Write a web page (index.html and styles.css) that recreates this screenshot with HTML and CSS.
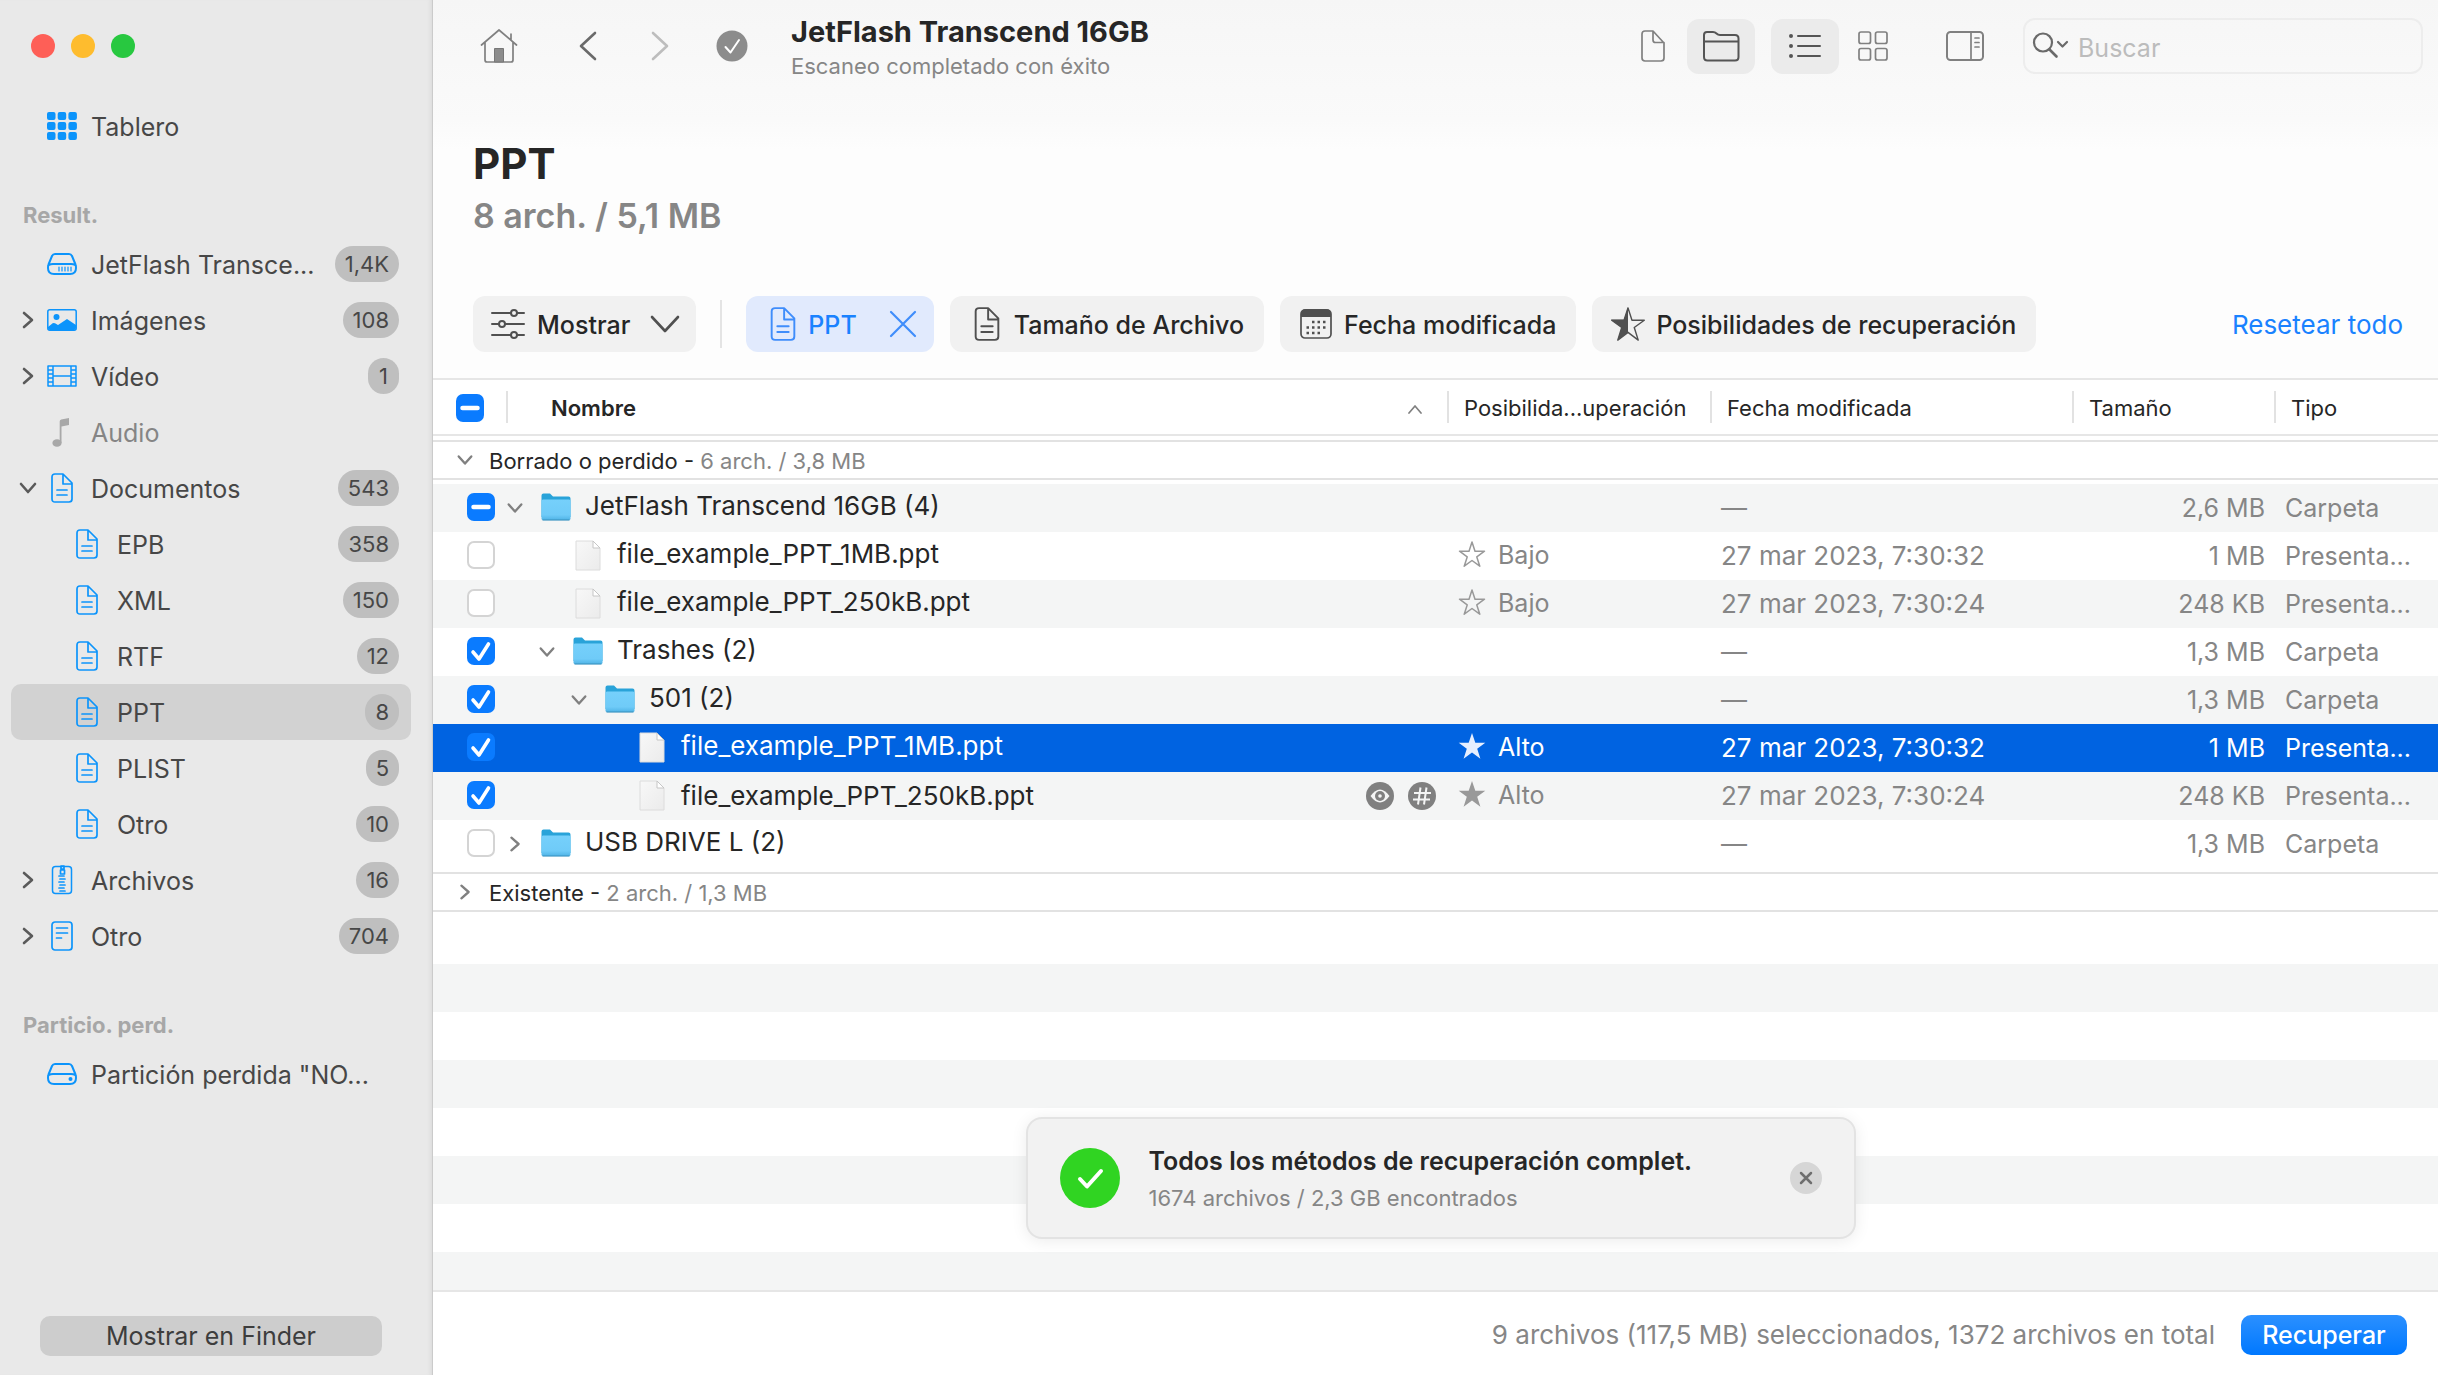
FILE: index.html
```html
<!DOCTYPE html>
<html lang="es">
<head>
<meta charset="utf-8">
<title>JetFlash Transcend 16GB</title>
<link rel="stylesheet" href="styles.css">
</head>
<body>
<svg class="sprite" aria-hidden="true">
  <defs>
    <linearGradient id="folder-front" x1="0" y1="0" x2="0" y2="1"><stop offset="0" stop-color="#76d0fb"/><stop offset=".75" stop-color="#6fcbf8"/><stop offset="1" stop-color="#4fb4e6"/></linearGradient>
    <linearGradient id="paper" x1="0" y1="0" x2="1" y2="1"><stop offset="0" stop-color="#f8f8f8"/><stop offset="1" stop-color="#ebebeb"/></linearGradient>
    <symbol id="chev-right" viewBox="0 0 20 20"><path d="M6 3l8 7-8 7" class="line w25"/></symbol>
    <symbol id="chev-down" viewBox="0 0 20 20"><path d="M3 6l7 8 7-8" class="line w25"/></symbol>
    <symbol id="i-grid9" viewBox="0 0 30 28"><g fill="currentColor"><rect x="0" y="0" width="8.500" height="8" rx="2"/><rect x="10.700" y="0" width="8.500" height="8" rx="2"/><rect x="21.400" y="0" width="8.500" height="8" rx="2"/><rect x="0" y="10" width="8.500" height="8" rx="2"/><rect x="10.700" y="10" width="8.500" height="8" rx="2"/><rect x="21.400" y="10" width="8.500" height="8" rx="2"/><rect x="0" y="20" width="8.500" height="8" rx="2"/><rect x="10.700" y="20" width="8.500" height="8" rx="2"/><rect x="21.400" y="20" width="8.500" height="8" rx="2"/></g></symbol>
    <symbol id="i-drive" viewBox="0 0 30 22"><path d="M8 1h14q2 0 3 2l3.500 8.500q.5 1 .5 3.500 0 6-6 6H7q-6 0-6-6 0-2.500.5-3.500L5 3q1-2 3-2zM2 12q1.500-1 4-1h18q2.500 0 4 1" class="line w18"/><path d="M12 14v4M15 14v4M18 14v4M21 14v4M24 14v4" class="line w12"/></symbol>
    <symbol id="i-disk" viewBox="0 0 30 22"><path d="M8 1h14q2 0 3 2l3.500 8.500q.5 1 .5 3.500 0 6-6 6H7q-6 0-6-6 0-2.500.5-3.500L5 3q1-2 3-2zM2 12q1.500-1 4-1h18q2.500 0 4 1" class="line w18"/><circle cx="23.500" cy="16" r="2" fill="currentColor"/></symbol>
    <symbol id="i-image" viewBox="0 0 30 22"><rect x=".8" y=".8" width="28.400" height="20.400" rx="2" class="line w15"/><circle cx="9.500" cy="8" r="3" fill="currentColor"/><path d="M1 18l5-4 2 .3 3 1.700 9-6 9 6v3q0 2-2 2H3q-2 0-2-2z" fill="currentColor"/></symbol>
    <symbol id="i-film" viewBox="0 0 30 22"><path d="M1 1h28v20H1zM6 1v20M24 1v20M6 11h18M1 5h5M1 9h5M1 13h5M1 17h5M24 5h5M24 9h5M24 13h5M24 17h5" class="line w15"/></symbol>
    <symbol id="i-note" viewBox="0 0 30 30"><ellipse cx="10" cy="26" rx="4.600" ry="3.800" fill="currentColor"/><path d="M12.700 26V4.500q0-1.500 1.500-2L22 1v7l-7.500 1.500V26z" fill="currentColor"/></symbol>
    <symbol id="i-doc" viewBox="0 0 22 30"><path d="M4 1h8l9 9v16q0 3-3 3H4q-3 0-3-3V4q0-3 3-3zM12 1v10h9M6 17h10M6 22h10" class="line w16"/></symbol>
    <symbol id="i-file" viewBox="0 0 26 34"><path d="M5 2h8l11 12v15q0 3-3 3H5q-3 0-3-3V5q0-3 3-3zM13 2v9q0 2.500 2.500 2.500H24" class="line w16"/></symbol>
    <symbol id="i-zip" viewBox="0 0 22 30"><rect x="1.500" y="1.500" width="19" height="27" rx="3" class="line w15"/><path d="M10 1h3v3h-3zM9.500 5h4v4h-4zM8 11h5M9 14h5M8 17h5M9 20h5M8 23h5M9 26h5" class="line w16"/></symbol>
    <symbol id="i-other" viewBox="0 0 22 30"><rect x="1" y="1" width="20" height="28" rx="3" class="line w16"/><path d="M5.500 7h11M5.500 12h11M5.500 17h5" class="line w16"/></symbol>
    <symbol id="i-folder" viewBox="0 0 32 32"><path d="M1.500 4.500q0-2 2-2h6.500l3 3h15.500q2 0 2 2V26h-29z" fill="#29a3d9"/><rect x="1.500" y="8.500" width="29" height="20.500" rx="1.500" fill="url(#folder-front)"/><path d="M2.500 29h27" stroke="#3e97c4" stroke-width="1.200"/></symbol>
    <symbol id="i-paper" viewBox="0 0 32 32"><path d="M4 2h17l7 7v22H4z" fill="url(#paper)" stroke="#dcdcdc"/><path d="M21 2v7h7z" fill="#fff" stroke="#c6c6c6"/></symbol>
    <symbol id="i-star" viewBox="0 0 28 28"><path d="M14 2l3 9.200h9.500l-7.700 5.700 3 9.300-7.800-5.700-7.800 5.700 3-9.300L1.500 11.200H11z" fill="none" stroke="currentColor" stroke-width="1.500" stroke-linejoin="round"/></symbol>
    <symbol id="i-starfull" viewBox="0 0 28 28"><path d="M14 1l3.300 9.800h10l-8.100 6 3.200 10-8.400-6.200-8.400 6.200 3.200-10L.7 10.800h10z" fill="currentColor"/></symbol>
    <symbol id="i-starhalf" viewBox="0 0 38 38"><path d="M19 2l4.200 13h13l-10.600 7.700 4.200 13.300L19 27.800 8.200 36l4.200-13.300L1.800 15h13z" class="line w15"/><path d="M19 1v27L8 36.500l4.300-13.700L1 14.500h13.800z" fill="currentColor"/></symbol>
    <symbol id="i-eye" viewBox="0 0 28 28"><circle cx="14" cy="14" r="14" fill="#808080"/><path d="M4.500 14Q14 1 23.500 14 14 27 4.500 14z" fill="#f4f5f5"/><circle cx="14" cy="14" r="5" fill="#808080"/><circle cx="14" cy="14" r="1.800" fill="#f4f5f5"/></symbol>
    <symbol id="i-hash" viewBox="0 0 28 28"><circle cx="14" cy="14" r="14" fill="#808080"/><path d="M12.500 5.500l-2.500 17M18.500 5.500l-2.500 17M6 11h17M5 17.500h17" stroke="#f4f5f5" stroke-width="2" fill="none"/></symbol>
  </defs>
</svg>

<div class="app">
  <aside class="sidebar">
    <div class="lights"><button class="light red" aria-label="Cerrar"></button><button class="light amber" aria-label="Minimizar"></button><button class="light green" aria-label="Ampliar"></button></div>
    <nav class="nav">
      <ul class="list first">
        <li><a class="item" href="#"><span class="disc"></span><span class="ico"><svg width="30" height="28"><use href="#i-grid9"/></svg></span><span class="label">Tablero</span></a></li>
      </ul>
      <h2 class="section">Result.</h2>
      <ul class="list">
        <li><a class="item" href="#"><span class="disc"></span><span class="ico"><svg width="30" height="22"><use href="#i-drive"/></svg></span><span class="label">JetFlash Transce...</span><span class="badge">1,4K</span></a></li>
        <li><a class="item" href="#"><svg class="disc"><use href="#chev-right"/></svg><span class="ico"><svg width="30" height="22"><use href="#i-image"/></svg></span><span class="label">Imágenes</span><span class="badge">108</span></a></li>
        <li><a class="item" href="#"><svg class="disc"><use href="#chev-right"/></svg><span class="ico"><svg width="30" height="22"><use href="#i-film"/></svg></span><span class="label">Vídeo</span><span class="badge">1</span></a></li>
        <li><a class="item off" href="#"><span class="disc"></span><span class="ico"><svg width="30" height="30"><use href="#i-note"/></svg></span><span class="label">Audio</span></a></li>
        <li><a class="item" href="#"><svg class="disc"><use href="#chev-down"/></svg><span class="ico"><svg width="22" height="30"><use href="#i-doc"/></svg></span><span class="label">Documentos</span><span class="badge">543</span></a>
          <ul class="list sub">
            <li><a class="item" href="#"><span class="disc"></span><span class="ico"><svg width="22" height="30"><use href="#i-doc"/></svg></span><span class="label">EPB</span><span class="badge">358</span></a></li>
            <li><a class="item" href="#"><span class="disc"></span><span class="ico"><svg width="22" height="30"><use href="#i-doc"/></svg></span><span class="label">XML</span><span class="badge">150</span></a></li>
            <li><a class="item" href="#"><span class="disc"></span><span class="ico"><svg width="22" height="30"><use href="#i-doc"/></svg></span><span class="label">RTF</span><span class="badge">12</span></a></li>
            <li><a class="item current" href="#" aria-current="page"><span class="disc"></span><span class="ico"><svg width="22" height="30"><use href="#i-doc"/></svg></span><span class="label">PPT</span><span class="badge">8</span></a></li>
            <li><a class="item" href="#"><span class="disc"></span><span class="ico"><svg width="22" height="30"><use href="#i-doc"/></svg></span><span class="label">PLIST</span><span class="badge">5</span></a></li>
            <li><a class="item" href="#"><span class="disc"></span><span class="ico"><svg width="22" height="30"><use href="#i-doc"/></svg></span><span class="label">Otro</span><span class="badge">10</span></a></li>
          </ul>
        </li>
        <li><a class="item" href="#"><svg class="disc"><use href="#chev-right"/></svg><span class="ico"><svg width="22" height="30"><use href="#i-zip"/></svg></span><span class="label">Archivos</span><span class="badge">16</span></a></li>
        <li><a class="item" href="#"><svg class="disc"><use href="#chev-right"/></svg><span class="ico"><svg width="22" height="30"><use href="#i-other"/></svg></span><span class="label">Otro</span><span class="badge">704</span></a></li>
      </ul>
      <h2 class="section">Particio. perd.</h2>
      <ul class="list">
        <li><a class="item" href="#"><span class="disc"></span><span class="ico"><svg width="30" height="22"><use href="#i-disk"/></svg></span><span class="label">Partición perdida "NO...</span></a></li>
      </ul>
    </nav>
    <button class="finder">Mostrar en Finder</button>
  </aside>

  <main class="main">
    <header class="head">
      <div class="toolbar">
        <button class="tool home" aria-label="Inicio"><svg width="38" height="36" viewBox="0 0 38 36"><path d="M1.500 17L19 2l17.500 15M5 14.500V32q0 2 2 2h24q2 0 2-2V14.500M31 12V6" class="line w16"/><path d="M14.500 20.500h9V34h-9z" fill="#8c8c8c" stroke="#777"/></svg></button>
        <button class="tool back" aria-label="Atrás"><svg width="20" height="32" viewBox="0 0 20 32"><path d="M17 3L3 16l14 13" class="line w25"/></svg></button>
        <button class="tool fwd" aria-label="Adelante"><svg width="20" height="32" viewBox="0 0 20 32"><path d="M3 3l14 13L3 29" class="line w25"/></svg></button>
        <svg class="done" width="32" height="32" viewBox="0 0 32 32"><circle cx="16" cy="16" r="15.500" fill="#8c8c8c"/><path d="M9.500 17l5 5.500L23 10" fill="none" stroke="#fff" stroke-width="2" stroke-linecap="round" stroke-linejoin="round"/></svg>
        <div class="titles"><div class="title">JetFlash Transcend 16GB</div><div class="status">Escaneo completado con éxito</div></div>
        <div class="views">
          <button class="view" aria-label="Archivos"><svg width="26" height="34"><use href="#i-file"/></svg></button>
          <button class="view on" aria-label="Carpetas"><svg width="38" height="32" viewBox="0 0 38 32"><path d="M2 11.500V5q0-3 3-3h6q2 0 3.500 1.500T18 5h15q3.500 0 3.500 3.500v3M2 11.500h34.500V27q0 3.500-3.500 3.500H5.500Q2 30.500 2 27z" class="line w18"/></svg></button>
        </div>
        <div class="views layout">
          <button class="view on" aria-label="Lista"><svg width="34" height="26" viewBox="0 0 34 26"><path d="M10 3h22M10 13h22M10 23h22" class="line w18"/><circle cx="3" cy="3" r="2" fill="currentColor"/><circle cx="3" cy="13" r="2" fill="currentColor"/><circle cx="3" cy="23" r="2" fill="currentColor"/></svg></button>
          <button class="view" aria-label="Cuadrícula"><svg width="32" height="32" viewBox="0 0 32 32"><g class="line w16"><rect x="2" y="2" width="11.500" height="11.500" rx="2"/><rect x="18.500" y="2" width="11.500" height="11.500" rx="2"/><rect x="2" y="18.500" width="11.500" height="11.500" rx="2"/><rect x="18.500" y="18.500" width="11.500" height="11.500" rx="2"/></g></svg></button>
        </div>
        <button class="view panel" aria-label="Panel lateral"><svg width="40" height="32" viewBox="0 0 40 32"><rect x="2" y="2" width="36" height="28" rx="3.500" class="line w18"/><path d="M26 2v28M30 8h4M30 12.500h4M30 17h4" class="line w16"/></svg></button>
        <label class="search"><svg width="38" height="30" viewBox="0 0 38 30"><circle cx="11" cy="11.500" r="9" class="line w20"/><path d="M17.500 18.500l7 7" class="line w25"/><path d="M26 11l4.500 4.500L35 11" class="line w20"/></svg><input type="search" placeholder="Buscar" aria-label="Buscar"></label>
      </div>

      <h1 class="heading">PPT</h1>
      <p class="summary">8 arch. / 5,1 MB</p>

      <div class="filters">
        <button class="chip show"><svg width="34" height="30" viewBox="0 0 34 30"><path d="M1 4h19M26 4h7M1 15h7M14 15h19M1 26h19M26 26h7" class="line w18"/><g class="line w18"><circle cx="23" cy="4" r="3"/><circle cx="11" cy="15" r="3"/><circle cx="23" cy="26" r="3"/></g></svg><span>Mostrar</span><svg class="caret" width="30" height="20" viewBox="0 0 30 20"><path d="M2 3l13 14L28 3" class="line w25"/></svg></button>
        <span class="rule"></span>
        <button class="chip active"><svg width="26" height="34"><use href="#i-doc"/></svg><span>PPT</span><svg class="x" width="28" height="28" viewBox="0 0 28 28"><path d="M2 2l24 24M26 2L2 26" class="line w20"/></svg></button>
        <button class="chip size"><svg width="26" height="34"><use href="#i-doc"/></svg><span>Tamaño de Archivo</span></button>
        <button class="chip date"><svg width="32" height="32" viewBox="0 0 32 32"><rect x="1" y="2" width="30" height="28" rx="4" class="line w16"/><path d="M1 9V6q0-5 5-5h20q5 0 5 5v3z" fill="currentColor"/><path d="M12 14h15M6.500 19.500h20M6.500 25h15" stroke="currentColor" stroke-width="2.500" stroke-dasharray="2.500 3" fill="none"/></svg><span>Fecha modificada</span></button>
        <button class="chip chance"><svg width="36" height="36"><use href="#i-starhalf"/></svg><span>Posibilidades de recuperación</span></button>
        <a class="reset" href="#">Resetear todo</a>
      </div>
    </header>

    <div class="content">
      <table class="files">
        <colgroup><col class="c-check"><col class="c-name"><col class="c-chance"><col class="c-date"><col class="c-size"><col class="c-type"></colgroup>
        <thead>
          <tr>
            <th class="pick"><input type="checkbox" class="box mixed" aria-label="Seleccionar todo"></th>
            <th class="name-h"><span>Nombre</span><svg width="16" height="10" viewBox="0 0 16 10"><path d="M2 9l6-7 6 7" class="line w16"/></svg></th>
            <th>Posibilida...uperación</th><th>Fecha modificada</th><th>Tamaño</th><th>Tipo</th>
          </tr>
        </thead>
        <tbody class="group open">
          <tr><th colspan="6" scope="rowgroup"><svg class="tw"><use href="#chev-down"/></svg>Borrado o perdido - <span class="muted">6 arch. / 3,8 MB</span></th></tr>
        </tbody>
        <tbody class="rows">
          <tr><td class="pick"><input type="checkbox" class="box mixed" aria-label="JetFlash Transcend 16GB"></td><td class="name l1"><svg class="tw"><use href="#chev-down"/></svg><svg class="fi"><use href="#i-folder"/></svg>JetFlash Transcend 16GB (4)</td><td></td><td class="when">—</td><td class="num">2,6 MB</td><td>Carpeta</td></tr>
          <tr><td class="pick"><input type="checkbox" class="box" aria-label="file_example_PPT_1MB.ppt"></td><td class="name l2"><span class="tw"></span><svg class="fi"><use href="#i-paper"/></svg>file_example_PPT_1MB.ppt</td><td><svg class="st"><use href="#i-star"/></svg>Bajo</td><td class="when">27 mar 2023, 7:30:32</td><td class="num">1 MB</td><td>Presenta...</td></tr>
          <tr><td class="pick"><input type="checkbox" class="box" aria-label="file_example_PPT_250kB.ppt"></td><td class="name l2"><span class="tw"></span><svg class="fi"><use href="#i-paper"/></svg>file_example_PPT_250kB.ppt</td><td><svg class="st"><use href="#i-star"/></svg>Bajo</td><td class="when">27 mar 2023, 7:30:24</td><td class="num">248 KB</td><td>Presenta...</td></tr>
          <tr><td class="pick"><input type="checkbox" class="box" checked aria-label="Trashes"></td><td class="name l2"><svg class="tw"><use href="#chev-down"/></svg><svg class="fi"><use href="#i-folder"/></svg>Trashes (2)</td><td></td><td class="when">—</td><td class="num">1,3 MB</td><td>Carpeta</td></tr>
          <tr><td class="pick"><input type="checkbox" class="box" checked aria-label="501"></td><td class="name l3"><svg class="tw"><use href="#chev-down"/></svg><svg class="fi"><use href="#i-folder"/></svg>501 (2)</td><td></td><td class="when">—</td><td class="num">1,3 MB</td><td>Carpeta</td></tr>
          <tr class="selected"><td class="pick"><input type="checkbox" class="box" checked aria-label="file_example_PPT_1MB.ppt en 501"></td><td class="name l4"><span class="tw"></span><svg class="fi"><use href="#i-paper"/></svg>file_example_PPT_1MB.ppt</td><td><svg class="st"><use href="#i-starfull"/></svg>Alto</td><td class="when">27 mar 2023, 7:30:32</td><td class="num">1 MB</td><td>Presenta...</td></tr>
          <tr><td class="pick"><input type="checkbox" class="box" checked aria-label="file_example_PPT_250kB.ppt en 501"></td><td class="name l4"><div class="line-up"><span class="tw"></span><svg class="fi"><use href="#i-paper"/></svg>file_example_PPT_250kB.ppt<button class="act" aria-label="Vista previa"><svg width="28" height="28"><use href="#i-eye"/></svg></button><button class="act" aria-label="Hexadecimal"><svg width="28" height="28"><use href="#i-hash"/></svg></button></div></td><td><svg class="st"><use href="#i-starfull"/></svg>Alto</td><td class="when">27 mar 2023, 7:30:24</td><td class="num">248 KB</td><td>Presenta...</td></tr>
          <tr><td class="pick"><input type="checkbox" class="box" aria-label="USB DRIVE L"></td><td class="name l1"><svg class="tw"><use href="#chev-right"/></svg><svg class="fi"><use href="#i-folder"/></svg>USB DRIVE L (2)</td><td></td><td class="when">—</td><td class="num">1,3 MB</td><td>Carpeta</td></tr>
        </tbody>
        <tbody class="group">
          <tr><th colspan="6" scope="rowgroup"><svg class="tw"><use href="#chev-right"/></svg>Existente - <span class="muted">2 arch. / 1,3 MB</span></th></tr>
        </tbody>
      </table>
      <div class="empty"></div>
      <div class="toast-layer">
        <div class="toast" role="status">
          <svg width="60" height="60" viewBox="0 0 60 60"><circle cx="30" cy="30" r="30" fill="#30d422"/><path d="M20 31l7 7.500L41 23" fill="none" stroke="#fff" stroke-width="4" stroke-linecap="round" stroke-linejoin="round"/></svg>
          <div class="toast-text"><div class="toast-title">Todos los métodos de recuperación complet.</div><div class="toast-sub">1674 archivos / 2,3 GB encontrados</div></div>
          <button class="close" aria-label="Cerrar aviso"><svg width="32" height="32" viewBox="0 0 32 32"><circle cx="16" cy="16" r="16" fill="#d6d6d6"/><path d="M11 11l10 10M21 11L11 21" stroke="#6f6f6f" stroke-width="2.500" stroke-linecap="round"/></svg></button>
        </div>
      </div>
    </div>

    <footer class="foot"><span>9 archivos (117,5 MB) seleccionados, 1372 archivos en total</span><button class="recover">Recuperar</button></footer>
  </main>
</div>
</body>
</html>
```
FILE: styles.css
```css
* { box-sizing: border-box; }
body { margin: 0; font-family: Inter, "Liberation Sans", sans-serif; font-size: 25px; line-height: 32px; color: #262626; background: #fff; }
button { margin: 0; padding: 0; border: 0; background: none; font: inherit; color: inherit; }
a { color: inherit; text-decoration: none; }
ul { list-style: none; margin: 0; padding: 0; }
h1, h2, p { margin: 0; }
svg { display: block; flex: none; }
.sprite { position: absolute; width: 0; height: 0; }
.line { fill: none; stroke: currentColor; stroke-linecap: round; stroke-linejoin: round; }
.w12 { stroke-width: 1.2; } .w15 { stroke-width: 1.5; } .w16 { stroke-width: 1.7; } .w18 { stroke-width: 2; } .w20 { stroke-width: 2.2; } .w25 { stroke-width: 2.6; }

.app { display: flex; min-height: 100vh; }

/* Sidebar */
.sidebar { flex: none; width: 433px; display: flex; flex-direction: column; padding-top: 34px; background: #e9e9e9; border-right: 1px solid #cbcbcb; box-shadow: inset -4px 0 4px -3px #d8d8d8; color: #474747; }
.lights { display: flex; gap: 16px; padding-left: 31px; margin-bottom: 40px; }
.light { width: 24px; height: 24px; border-radius: 50%; }
.red { background: #fe5f57; } .amber { background: #febc2e; } .green { background: #28c840; }
.nav { flex: 1; }
.item { display: flex; align-items: center; height: 56px; margin: 0 21px 0 11px; padding: 0 12px 0 7px; border-radius: 10px; }
.sub .item { padding-left: 33px; }
.current { background: #d2d2d2; }
.disc { flex: none; width: 20px; height: 20px; color: #5a5a5a; }
.ico { flex: none; display: flex; justify-content: center; width: 30px; margin: 0 14px 0 9px; color: #0c94fb; }
.sub .ico { margin-left: 8px; margin-right: 15px; }
.label { flex: 1; padding-top: 2px; white-space: nowrap; }
.off { color: #858585; } .off .ico { color: #a8a8a8; }
.badge { min-width: 31px; height: 36px; padding: 0 10px; border-radius: 18px; background: #bfbfbf; font-size: 22px; line-height: 36px; text-align: center; }
.section { margin-top: 38px; padding: 2px 0 0 23px; font-size: 22px; line-height: 42px; font-weight: 700; color: #a7a7a7; }
.finder { width: 342px; height: 40px; margin: 0 0 19px 40px; border-radius: 10px; background: #cdcdcd; color: #3d3d3d; }

/* Header */
.main { flex: 1; min-width: 0; display: flex; flex-direction: column; }
.head { padding: 0 35px 26px 40px; background: linear-gradient(#f6f6f6, #fafafa 120px, #fdfdfd 150px); border-bottom: 2px solid #e6e6e6; }
.toolbar { display: flex; align-items: center; height: 92px; margin-right: -20px; color: #808080; }
.home { margin-left: 7px; }
.back { margin-left: 60px; color: #6a6a6a; }
.fwd { margin-left: 52px; color: #bdbdbd; }
.done { margin-left: 46px; }
.titles { flex: 1; margin-left: 43px; padding-top: 4px; white-space: nowrap; }
.title { font-size: 29px; line-height: 36px; font-weight: 700; color: #262626; }
.status { font-size: 22px; line-height: 32px; color: #868686; }
.views { display: flex; }
.view { display: flex; align-items: center; justify-content: center; width: 68px; height: 55px; border-radius: 12px; }
.on { background: #ebebeb; color: #555; }
.layout { margin-left: 16px; }
.panel { margin: 0 24px; }
.search { display: flex; align-items: center; width: 400px; height: 56px; padding-left: 7px; border: 2px solid #ededed; border-radius: 12px; color: #6a6a6a; }
.search input { flex: 1; min-width: 0; margin-left: 8px; padding: 4px 0 0; border: 0; outline: 0; background: none; font: inherit; color: #262626; }
.search input::placeholder { color: #bcbcbc; opacity: 1; }
.heading { margin-top: 44px; font-size: 42px; line-height: 56px; font-weight: 700; }
.summary { font-size: 34px; line-height: 48px; font-weight: 600; color: #868686; }
.filters { display: flex; align-items: center; gap: 16px; margin-top: 56px; white-space: nowrap; }
.chip { display: flex; align-items: center; gap: 12px; height: 56px; padding: 0 20px; border-radius: 12px; background: #f1f1f1; font-weight: 500; }
.chip span { padding-top: 2px; }
.chip svg { color: #505050; }
.show { padding: 0 16px 0 18px; }
.show .caret { margin-left: 8px; }
.rule { width: 2px; height: 48px; margin: 0 8px; background: #e4e4e4; }
.active { background: #e1eafd; color: #1a82ff; padding: 0 17px 0 24px; }
.active svg { color: #3f8dfb; }
.active .x { margin-left: 20px; }
.size { gap: 14px; padding-left: 24px; }
.chance { gap: 10px; padding-left: 18px; }
.reset { margin-left: auto; padding-top: 2px; font-size: 26px; color: #1a82ff; }

/* Table */
.content { position: relative; flex: 1; display: flex; flex-direction: column; }
.files { width: 100%; table-layout: fixed; border-collapse: separate; border-spacing: 0; white-space: nowrap; }
.c-check { width: 73px; } .c-chance { width: 263px; } .c-date { width: 362px; } .c-size { width: 202px; } .c-type { width: 164px; }
.files th, .files td { padding: 0 0 0 11px; text-align: left; vertical-align: middle; }
.files thead th { height: 56px; padding: 2px 0 0 17px; border-bottom: 2px solid #e6e6e6; font-size: 22px; font-weight: 400; background: linear-gradient(#e2e2e2, #e2e2e2) 0 center / 2px 32px no-repeat; }
.files thead .pick { padding-left: 23px; background: none; }
.files thead .name-h { padding: 2px 24px 0 45px; font-weight: 600; }
.name-h span { display: inline-block; }
.name-h svg { float: right; margin-top: 12px; color: #808080; }
.group th { height: 40px; padding: 2px 0 0 22px; border: solid #e2e2e2; border-width: 2px 0; font-size: 22px; line-height: 30px; font-weight: 400; }
.files .group th { padding: 2px 0 0 23px; }
.group .tw { display: inline-block; margin-right: 15px; vertical-align: 0; }
.open::before, .open::after, .rows::after { content: ""; display: table-row; height: 4px; }
.muted { color: #868686; }
.rows td { height: 48px; color: #868686; }
.rows tr:nth-child(odd) { background: #f4f5f5; }
.files td.pick { padding: 0 0 2px 34px; }
.files td.name { padding-left: 0; font-size: 26px; color: #262626; }
.files td.when { font-size: 26px; }
.files td.num { padding-right: 9px; text-align: right; }
.name > *, .line-up > .tw, .line-up > .fi, .st { display: inline-block; }
.tw { width: 18px; height: 18px; color: #808080; vertical-align: middle; }
.fi { width: 32px; height: 32px; margin: 0 13px 3px 16px; vertical-align: middle; }
.st { width: 28px; height: 28px; margin: 0 12px 5px 0; color: #999; vertical-align: middle; }
.files td.l2 { padding-left: 32px; } .files td.l3 { padding-left: 64px; } .files td.l4 { padding-left: 96px; }
.line-up { display: flex; align-items: center; padding-right: 11px; }
.act { margin-left: 14px; }
.act:first-of-type { margin-left: auto; }
.rows tr.selected { background: #0063e1; }
.files .selected td { color: #fff; }
.selected .st { color: #e6efff; }
.box { appearance: none; display: block; width: 28px; height: 28px; margin: 0; border: 2px solid #d4d4d4; border-radius: 7px; background: #fff center / 28px 28px no-repeat; }
.box:checked, .box.mixed { border: 0; background-color: #0a7bff; }
.box:checked { background-image: url("data:image/svg+xml,%3Csvg xmlns='http://www.w3.org/2000/svg' viewBox='0 0 28 28'%3E%3Cpath d='M6 15l6 7L21.500 7' fill='none' stroke='white' stroke-width='3.600' stroke-linecap='round' stroke-linejoin='round'/%3E%3C/svg%3E"); }
.box.mixed { background-image: url("data:image/svg+xml,%3Csvg xmlns='http://www.w3.org/2000/svg' viewBox='0 0 28 28'%3E%3Cpath d='M6.500 14h15' fill='none' stroke='white' stroke-width='4.500' stroke-linecap='round'/%3E%3C/svg%3E"); }
.empty { flex: 1; margin-top: 4px; background: repeating-linear-gradient(#fff 0 48px, #f4f5f5 48px 96px); }

/* Notice */
.toast-layer { position: absolute; left: 10px; right: 0; bottom: 51px; display: flex; justify-content: center; }
.toast { display: flex; align-items: center; width: 830px; height: 122px; padding: 0 32px; border: 2px solid #e3e3e3; border-radius: 16px; background: #f2f2f2; box-shadow: 0 2px 16px rgba(0, 0, 0, .08); }
.toast-text { flex: 1; margin-left: 29px; white-space: nowrap; }
.toast-title { padding-top: 2px; font-size: 25px; line-height: 38px; font-weight: 600; }
.toast-sub { font-size: 22px; line-height: 36px; color: #868686; }

.foot { display: flex; align-items: center; justify-content: flex-end; gap: 26px; height: 85px; padding: 2px 31px 0 0; border-top: 2px solid #e6e6e6; font-size: 26px; color: #868686; }
.recover { height: 40px; width: 166px; border-radius: 10px; background: linear-gradient(#2b90ff, #0078ff); color: #fff; font-size: 25px; font-weight: 500; }
```
